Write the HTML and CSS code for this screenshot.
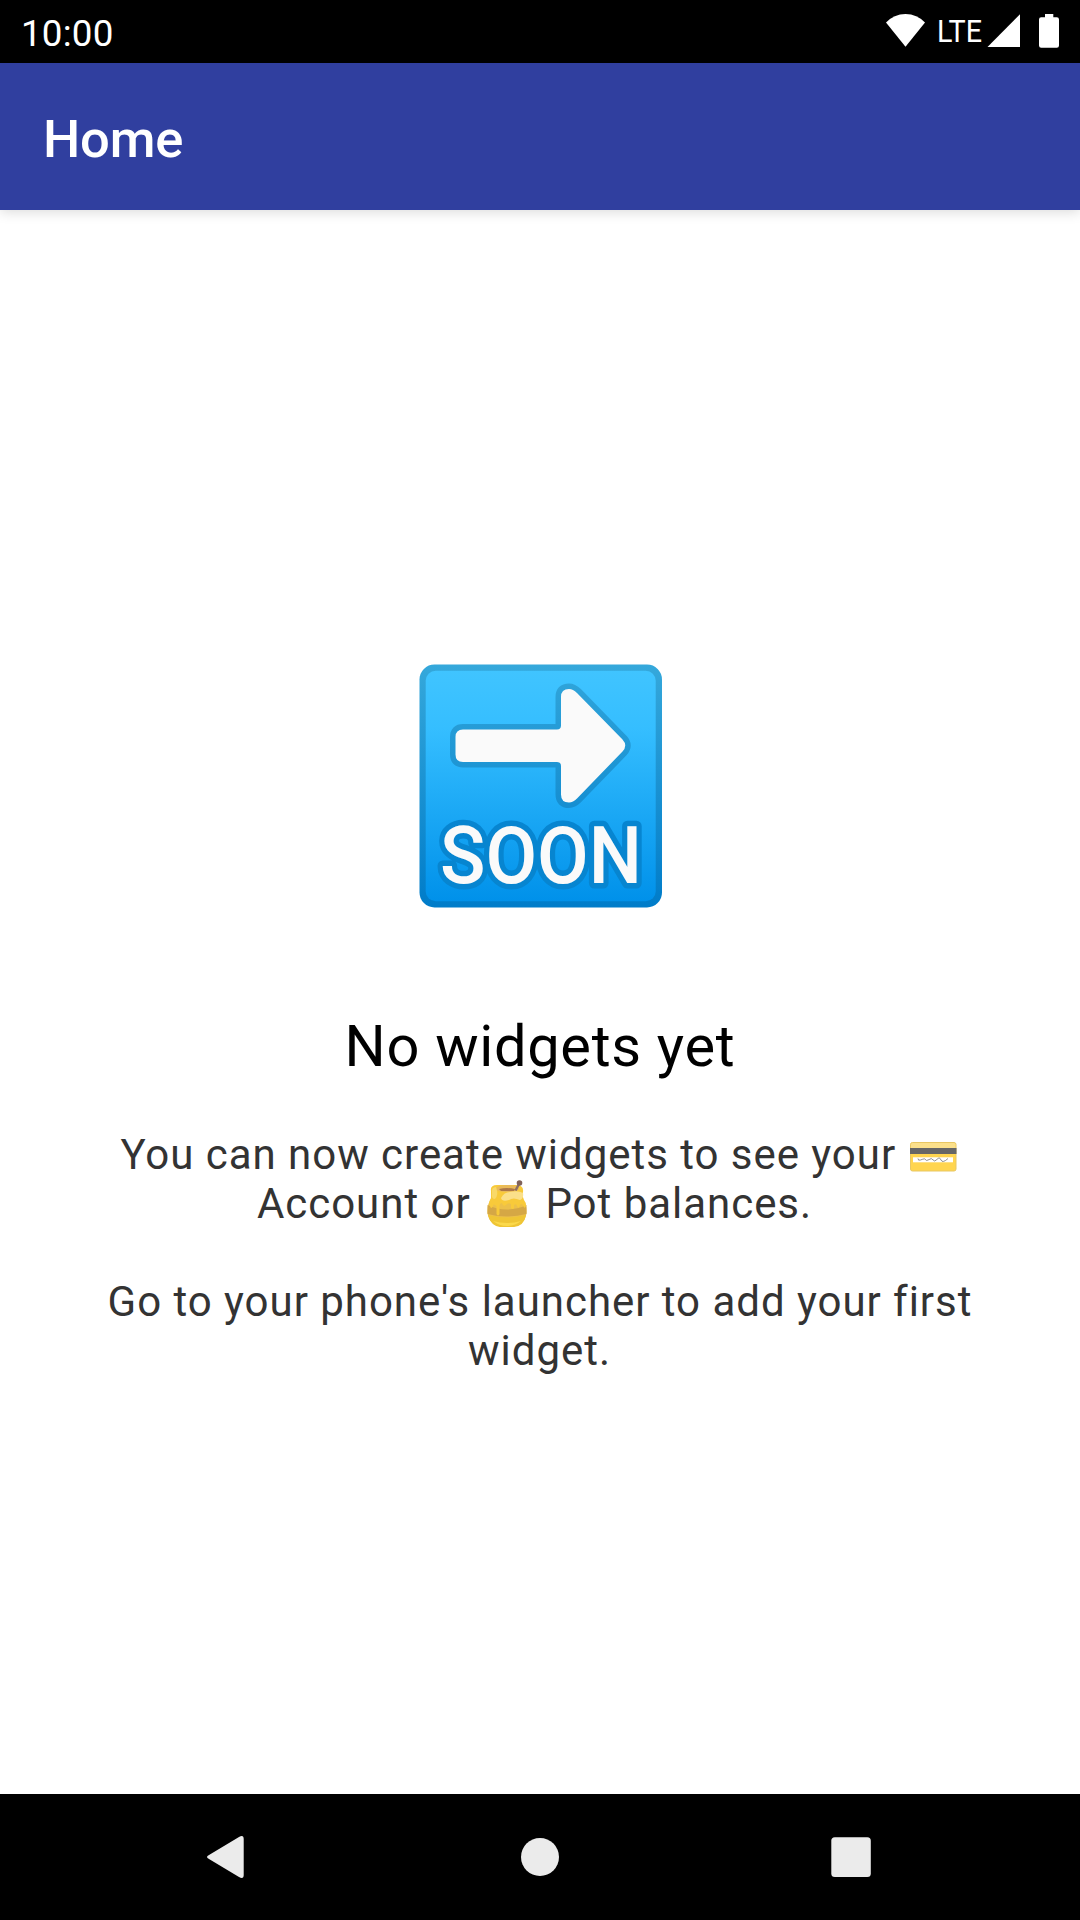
FILE: index.html
```html
<!DOCTYPE html>
<html lang="en">
<head>
<meta charset="utf-8">
<title>Home</title>
<link rel="stylesheet" href="styles.css">
</head>
<body>
<div class="screen">
  <div class="status-bar">
    <span class="clock">10:00</span>
    <svg class="status-icons" width="194" height="63" viewBox="886 0 194 63">
      <path d="M886 22.6Q894 14 905.5 14Q917 14 925 22.6L905.5 46.7Z"/>
      <text class="network" x="937" y="42" textLength="45" lengthAdjust="spacingAndGlyphs">LTE</text>
      <path d="M987.5 47L1020 14.3V47Z"/>
      <path d="M1045 14h8.3v3.3h3.5q2.2 0 2.2 2.2v26q0 2.2-2.2 2.2h-15.6q-2.2 0-2.2-2.2v-26q0-2.2 2.2-2.2h3.8z"/>
    </svg>
  </div>
  <header class="app-bar"><h1 class="app-title">Home</h1></header>
  <main class="content">
    <svg class="hero" width="244" height="244" viewBox="418 664 244 244">
      <defs>
        <linearGradient id="sky" x1="0" y1="0" x2="0" y2="1">
          <stop offset="0" stop-color="#40c4ff"/>
          <stop offset=".25" stop-color="#35beff"/>
          <stop offset="1" stop-color="#0091ea"/>
        </linearGradient>
        <linearGradient id="rim" x1="0" y1="0" x2="0" y2="1">
          <stop offset="0" stop-color="#35a8db"/>
          <stop offset="1" stop-color="#007cc9"/>
        </linearGradient>
        <linearGradient id="edge" gradientUnits="userSpaceOnUse" x1="0" y1="680" x2="0" y2="890">
          <stop offset="0" stop-color="#2fa4da"/>
          <stop offset="1" stop-color="#0580cb"/>
        </linearGradient>
      </defs>
      <rect x="419.500" y="664.500" width="242.500" height="243" rx="15" fill="url(#rim)"/>
      <rect x="425.700" y="670.700" width="230" height="230.600" rx="10" fill="url(#sky)"/>
      <path d="M463 729.500H557Q561 729.500 561 725.500V697Q561 689 569 689Q573 689 577 693L622.500 739.500Q628 745.500 622.500 751.500L577 798.500Q573 802.500 569 802.500Q561 802.500 561 794.500V766Q561 762 557 762H463Q455.500 762 455.500 754.500V737Q455.500 729.500 463 729.500Z" fill="#fafafa" stroke="url(#edge)" stroke-width="11" stroke-linejoin="round" paint-order="stroke"/>
      <text class="soon" x="440" y="882.500" textLength="202" lengthAdjust="spacingAndGlyphs">SOON</text>
    </svg>
    <h2 class="headline">No widgets yet</h2>
    <p class="body">You can now create widgets to see your <svg class="card" width="52" height="40" viewBox="0 0 52 40">
        <rect x="2.500" y="5.500" width="45.500" height="28.500" rx="2" fill="#ffd54f" stroke="#e8c764"/>
        <path d="M3 11V7.500Q3 6 4.500 6H46Q47.500 6 47.500 7.500V11Z" fill="#fbe08b"/>
        <rect x="2" y="11" width="46.500" height="6" fill="#666"/>
        <rect x="5" y="20.300" width="40" height="5" fill="#fff"/>
        <path d="M10 21.500q0 2.500 2.500 1.500t4-1.200q2 3 4.500.8t4 .3t4-.5t4 .6t7-1.500" fill="none" stroke="#777" stroke-width=".8"/>
      </svg><br><span class="account-line">Account or <svg class="pot" width="52" height="50" viewBox="1 0 52 50">
        <path d="M10 9H41V19Q46 24 45.500 33Q44 47 26 47Q8 47 6.500 33Q6 24 10 19Z" fill="#ecc04a"/>
        <path d="M6.500 25Q26 34 45.500 25V34Q26 39 6.500 34Z" fill="#d5a745"/>
        <path d="M7 35Q26 40 45 35Q43 46 33 47H19Q10 46 7 35Z" fill="#efc535"/>
        <path d="M12 41Q26 45 40 41Q34 46 26 46Q18 46 12 41Z" fill="#fbd94b"/>
        <path d="M10 11Q9 5 16 5H35Q43 5 42 12Q41 16 43 20Q46 24 44.500 27Q43 29 42 25Q40 23 39 25Q38 30 36 26Q35 23 33 25V28Q32 30 30 28V24Q27 22 25 25Q22 27 21 23Q19 23 18.500 26V34Q17 37 15.500 34V26Q12 23 12 26Q10 30 9 26Q7 23 10 18Z" fill="#f8ca3a"/>
        <path d="M15 9Q16 5 26 5Q38 5 38 9Q37 12 26 12Q16 12 15 9Z" fill="#e9ba5a"/>
        <path d="M18 9Q26 7 34 9L33 11H20Z" fill="#ac7748"/>
        <path d="M20 18Q23 12 29 12Q37 10 42 13Q43 18 39 20Q32 17 28 20Q21 22 20 18Z" fill="#fbe08a"/>
        <path d="M11 13Q10 7 15 7Q18 15 14 19Q10 19 11 13Z" fill="#f9d968"/>
        <path d="M34.500 10.500L38 4" stroke="#8d6e63" stroke-width="2.500"/>
        <circle cx="38.500" cy="3" r="2.800" fill="#806259"/>
      </svg> Pot balances.</span><br><br>Go to your phone's launcher to add your first<br><span class="last-line">widget.</span></p>
  </main>
  <nav class="nav-bar">
    <svg width="1080" height="126" viewBox="0 1794 1080 126">
      <path d="M209 1855L239 1837Q243.700 1834.500 243.700 1839V1875Q243.700 1879.500 239 1877L209 1859Q205 1857 209 1855Z"/>
      <circle cx="540" cy="1857" r="19"/>
      <rect x="831.300" y="1837.200" width="39.500" height="39.700" rx="3.500"/>
    </svg>
  </nav>
</div>
</body>
</html>
```
FILE: styles.css
```css
body {
  margin: 0;
  background: #fff;
  font-family: Roboto, sans-serif;
}

.screen {
  display: flex;
  flex-direction: column;
  width: 1080px;
  height: 1920px;
  overflow: hidden;
}

.status-bar {
  flex: 0 0 63px;
  display: flex;
  justify-content: space-between;
  background: #000;
  color: #fff;
}

.clock {
  padding: 4px 0 0 21px;
  font-size: 36.75px;
  line-height: 59px;
  letter-spacing: 0.2px;
}

.status-icons {
  display: block;
  fill: #fff;
}

.network {
  font-size: 32px;
}

.app-bar {
  flex: 0 0 147px;
  display: flex;
  align-items: center;
  padding: 4px 0 0 43px;
  box-sizing: border-box;
  background: #303f9f;
  color: #fff;
  box-shadow: 0 2px 12px rgba(0, 0, 0, 0.15);
}

.app-title {
  margin: 0;
  font-size: 52.5px;
  font-weight: 500;
  line-height: 62px;
  letter-spacing: -0.2px;
}

.content {
  flex: 1;
  display: flex;
  flex-direction: column;
  align-items: center;
  padding-top: 454px;
}

.hero {
  display: block;
}

.soon {
  font-size: 79px;
  font-weight: 500;
  fill: #fafafa;
  stroke: #0785d0;
  stroke-width: 11px;
  stroke-linejoin: round;
  paint-order: stroke;
}

.headline {
  margin: 104px 0 0;
  font-size: 57.75px;
  font-weight: 400;
  line-height: 68px;
  letter-spacing: 0.7px;
  color: #000;
}

.body {
  margin: 50px 0 0;
  font-size: 42px;
  line-height: 49px;
  letter-spacing: 0.97px;
  text-align: center;
  white-space: nowrap;
  color: #333;
}

.card {
  margin: -12px 0;
  vertical-align: 4.5px;
}

.pot {
  margin: -14px 0;
  vertical-align: 2px;
}

.account-line {
  padding-right: 11px;
}

.last-line {
  padding-right: 1px;
}

.nav-bar {
  flex: 0 0 126px;
  background: #000;
  fill: #ebebeb;
}

.nav-bar svg {
  display: block;
}
```
